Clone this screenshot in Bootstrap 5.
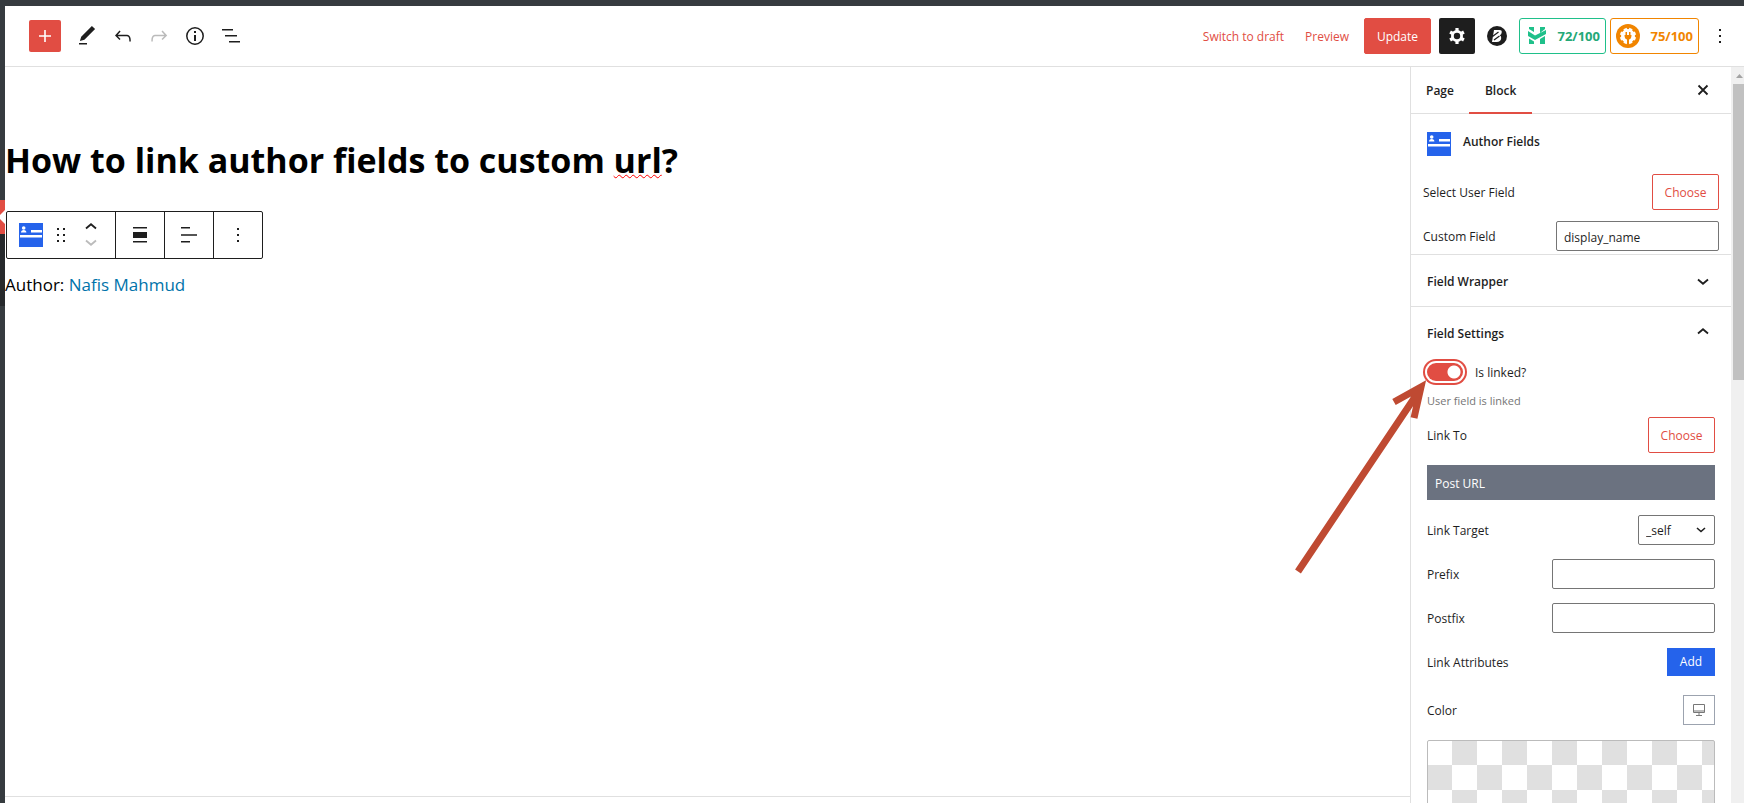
<!DOCTYPE html>
<html lang="en">
<head>
<meta charset="utf-8">
<meta name="viewport" content="width=device-width, initial-scale=1">
<title>Edit Page</title>
<link href="https://cdn.jsdelivr.net/npm/bootstrap@5.3.0/dist/css/bootstrap.min.css" rel="stylesheet">
<script src="https://cdn.jsdelivr.net/npm/bootstrap@5.3.0/dist/js/bootstrap.bundle.min.js" defer></script>
<style>
  :root { --accent: #e14d43; --ink: #1e1e1e; --line: #e0e0e0; --blue: #2563eb; }
  body { font: 12px/20px "Open Sans", "Noto Sans", sans-serif; color: var(--ink); }
  svg { display: block; flex-shrink: 0; }
  button { font: inherit; color: inherit; }
  .admin-bar { height: 6px; background: #363b3f; }
  .admin-menu { width: 5px; background: #363b3f; }
  .menu-gap { height: 194px; }
  .menu-current { height: 34px; background: var(--accent); }
  .menu-sub { height: 72px; background: #26292c; }
  .topbar { height: 61px; border-bottom: 1px solid var(--line); padding: 0 6px 0 24px; }
  .tool { width: 36px; height: 36px; padding: 6px; border: 0; background: none; }
  .tool-add { width: 32px; height: 32px; padding: 4px; background: var(--accent); border-radius: 2px; color: #fff; }
  .tool-dark { background: var(--ink); color: #fff; border-radius: 2px; }
  .btn-flat { font-size: 12px; line-height: 20px; border-radius: 2px; padding: 8px 11px 6px; min-width: 67px; }
  .btn-update { background: var(--accent); color: #fff; border-color: var(--accent); }
  .btn-choose { border-color: var(--accent); color: var(--accent); background: #fff; }
  .text-accent { color: var(--accent); text-decoration: none; }
  .header-links { gap: 21px; padding: 1px 15px 0 0; }
  .score { height: 36px; border: 1px solid; border-radius: 3px; background: #fff; font-weight: 700; font-size: 13px; padding: 0 5px; }
  .score-green { color: #1fc08a; width: 87px; padding-left: 8px; }
  .score-green span { color: #24a877; }
  .score-orange { color: #f18500; width: 89px; margin-right: 3px; }
  .post-title { font-size: 34px; line-height: 48px; font-weight: 700; color: #000; margin: 69px 0 27px; }
  .misspelt { text-decoration: underline wavy #f00 1px; text-underline-offset: 1px; text-decoration-skip-ink: none; }
  .block-toolbar { height: 48px; border: 1px solid var(--ink); border-radius: 2px; margin-left: 1px; background: #fff; }
  .block-toolbar > div + div { border-left: 1px solid var(--ink); }
  .block-toolbar button { border: 0; background: none; padding: 0; }
  .slot { width: 49px; }
  .author { font-size: 17px; line-height: 28px; color: #000; margin: 12px 0 0; }
  .author a { color: #0073aa; text-decoration: none; }
  .footer-line { height: 7px; border-top: 1px solid var(--line); }
  .settings { width: 334px; border-left: 1px solid var(--line); }
  .track { width: 13px; background: #f0f0f0; padding-left: 2px; }
  .arrow-up { height: 17px; padding: 7px 0 0 3px; }
  .thumb { height: 296px; background: #c1c1c1; }
  .tabs { height: 47px; border-bottom: 1px solid var(--line); padding-right: 18px; }
  .tabs button { border: 0; background: none; padding: 2px 15px 0; height: 47px; }
  .tabs button.active { border-bottom: 2px solid var(--accent); padding: 4px 16px 0; }
  .semi { font-weight: 600; }
  .block-card { padding: 18px 16px; }
  .top-fields { padding: 0 12px 3px; }
  .top-fields span, .top-fields label, .panel span, .panel label { padding-top: 2px; }
  .group-head { height: 52px; padding: 2px 16px 0; border: 0; border-top: 1px solid var(--line); background: none; }
  .field { width: 163px; height: 30px; border: 1px solid #757575; border-radius: 2px; padding: 2px 7px 0; color: var(--ink); font: inherit; background: #fff; }
  select.field { width: 77px; appearance: none; background: #fff url("data:image/svg+xml,%3Csvg xmlns='http://www.w3.org/2000/svg' width='10' height='6'%3E%3Cpath d='M1 1l4 3.5L9 1' fill='none' stroke='%231e1e1e' stroke-width='1.6'/%3E%3C/svg%3E") no-repeat right 8px center; }
  .panel { padding: 0 16px; }
  .gap-above-sm { margin-top: 11px; }
  .gap-above { margin-top: 14px; }
  .gap-above-md { margin-top: 15px; }
  .gap-above-lg { margin-top: 19px; }
  .switch-row { height: 28px; }
  .switch { appearance: none; width: 36px; height: 18px; margin: 0; border-radius: 9px; background: radial-gradient(circle at 27px 9px, #fff 6px, transparent 7px) var(--accent); box-shadow: 0 0 0 2px #fff, 0 0 0 4px var(--accent); }
  .hint { color: #757575; line-height: 16px; font-size: 11px; padding: 7px 0 8px; }
  .chosen { height: 35px; margin-top: 12px; background: #6b7280; color: #fff; padding: 2px 8px 0; }
  .btn-add { height: 28px; border: 0; background: var(--blue); color: #fff; padding: 0 12px; width: 48px; }
  .device { width: 32px; height: 30px; border: 1px solid #9ca3af; background: #fff; }
  .checker { height: 200px; border: 1px solid #bbb; border-radius: 2px; background: repeating-conic-gradient(#e0e0e0 0 25%, #fff 0 50%) -1px -1px / 50px 50px; }
  .pointer { position: absolute; left: -117px; top: 312px; pointer-events: none; }
</style>
</head>
<body class="vh-100 d-flex flex-column overflow-hidden bg-white">
<svg width="0" height="0" class="position-absolute" aria-hidden="true">
  <symbol id="card-icon" viewBox="0 0 24 24"><path fill="#2563eb" d="M0 0h24v24H0z"/><circle cx="4.700" cy="5" r="1.800" fill="#fff"/><path fill="#fff" d="M2 9.500q0-2.500 2.700-2.500t2.700 2.500zM12 7h11v2.500H12zM1 12h22v2.500H1z"/></symbol>
  <symbol id="down" viewBox="0 0 24 24"><path d="M7 9.500l5 4.200 5-4.200" fill="none" stroke="currentColor" stroke-width="1.800"/></symbol>
  <symbol id="up" viewBox="0 0 24 24"><path d="M7 11.500l5-4.200 5 4.200" fill="none" stroke="currentColor" stroke-width="1.800"/></symbol>
  <symbol id="dots" viewBox="0 0 24 24"><path fill="currentColor" d="M11 5h2v2h-2zM11 11h2v2h-2zM11 17h2v2h-2z"/></symbol>
</svg>

<div class="admin-bar flex-shrink-0"></div>
<div class="d-flex flex-grow-1 overflow-hidden">
  <div class="admin-menu flex-shrink-0">
    <div class="menu-gap"></div>
    <div class="menu-current"><svg width="5" height="34"><path d="M5 10v14L0 19v-4z" fill="#fff"/></svg></div>
    <div class="menu-sub"></div>
  </div>

  <div class="flex-grow-1 d-flex flex-column overflow-hidden">
    <header class="topbar d-flex align-items-center justify-content-between flex-shrink-0">
      <div class="d-flex align-items-center">
        <button class="tool tool-add me-2" aria-label="Add block"><svg width="24" height="24" viewBox="0 0 24 24"><path d="M12 6v12M6 12h12" stroke="currentColor" stroke-width="1.600"/></svg></button>
        <button class="tool" aria-label="Edit"><svg width="24" height="24" viewBox="0 0 24 24"><path fill="currentColor" d="M20.100 5.100L16.900 2 6.200 12.700l-1.300 4.400 4.500-1.300zM4 19h8v1.500H4z"/></svg></button>
        <button class="tool" aria-label="Undo"><svg width="24" height="24" viewBox="0 0 24 24"><path fill="currentColor" d="M18.300 11.700c-.6-.6-1.400-.9-2.300-.9H6.700l2.900-3.300-1.100-1-4.500 5L8.500 16l1-1-2.700-2.700H16c.5 0 .9.2 1.300.5 1 1 1 3.400 1 4.500v.3h1.500v-.2c0-1.500 0-4.300-1.500-5.700z"/></svg></button>
        <button class="tool" aria-label="Redo" disabled><svg width="24" height="24" viewBox="0 0 24 24"><path fill="#bbb" d="M15.600 6.500l-1.100 1 2.900 3.300H8c-.9 0-1.700.3-2.300.9-1.400 1.500-1.400 4.200-1.400 5.600v.2h1.500v-.3c0-1.100 0-3.500 1-4.500.3-.3.7-.5 1.300-.5h9.200L14.500 15l1.100 1.100 4.600-4.600z"/></svg></button>
        <button class="tool" aria-label="Details"><svg width="24" height="24" viewBox="0 0 24 24"><circle cx="12" cy="12" r="8.200" fill="none" stroke="currentColor" stroke-width="1.500"/><path fill="currentColor" d="M11 7h2v2h-2zM11 11h2v6h-2z"/></svg></button>
        <button class="tool" aria-label="List view"><svg width="24" height="24" viewBox="0 0 24 24"><path fill="currentColor" d="M3 5h11v1.500H3zM6 11h12v1.500H6zM10 17h11v1.500H10z"/></svg></button>
      </div>
      <div class="d-flex align-items-center">
        <div class="header-links d-flex">
          <a href="#" class="text-accent">Switch to draft</a>
          <a href="#" class="text-accent">Preview</a>
        </div>
        <button class="btn btn-flat btn-update me-2">Update</button>
        <button class="tool tool-dark me-1" aria-label="Settings"><svg width="24" height="24" viewBox="0 0 24 24"><circle cx="12" cy="12" r="4.600" fill="none" stroke="currentColor" stroke-width="2.800"/><path stroke="currentColor" stroke-width="3.200" d="M12 4v3M12 17v3M5.100 8l2.600 1.500M16.300 14.500l2.600 1.500M5.100 16l2.600-1.500M16.300 9.500l2.600-1.500"/></svg></button>
        <button class="tool me-1" aria-label="Blocks plugin"><svg width="24" height="24" viewBox="0 0 24 24"><circle cx="12" cy="12" r="10" fill="currentColor"/><path fill="#fff" d="M9 6h5.500q2.500 0 2.200 2.400-.2 1.800-1.900 2.900 1.700.9 1.400 2.900-.5 3.800-4.400 3.800H7z"/><path d="M7.500 12.500L13.500 8M9 16l5.500-4" stroke="#1e1e1e" stroke-width="1.300"/></svg></button>
        <button class="score score-green d-flex align-items-center justify-content-between me-1"><svg width="18" height="18" viewBox="0 0 18 18"><path fill="currentColor" d="M1 0h5v5L1 2zM12 0h5v2l-5 4zM0 4l7 4.500L18 3v4L7 13 0 9zM1 11.500l5 3V17H1zM12 12l5-3v8h-5z"/></svg><span>72/100</span></button>
        <button class="score score-orange d-flex align-items-center justify-content-between"><svg width="24" height="24" viewBox="0 0 24 24"><circle cx="12" cy="12" r="12" fill="currentColor"/><circle cx="12" cy="12" r="7" fill="#fff"/><path stroke="#fff" stroke-width="3.400" d="M9 4.500l6 15M15 4.500l-6 15M4.500 9l15 6M4.500 15l15-6"/><path fill="currentColor" d="M8.500 11h7q0 4-2.500 4.500V21h-2v-5.500Q8.500 15 8.500 11zM9.500 8H11v3H9.500zM13 8h1.500v3H13z"/></svg><span>75/100</span></button>
        <button class="tool" aria-label="Options"><svg width="24" height="24"><use href="#dots"/></svg></button>
      </div>
    </header>

    <div class="d-flex flex-grow-1 overflow-hidden">
      <main class="flex-grow-1 d-flex flex-column">
        <h1 class="post-title">How to link author fields to custom <span class="misspelt">url</span>?</h1>
        <div class="block-toolbar d-flex align-self-start">
          <div class="d-flex align-items-center ps-2 ms-1 pe-2 me-1">
            <button aria-label="Author Fields"><svg width="24" height="24"><use href="#card-icon"/></svg></button>
            <button class="mx-1 px-1" aria-label="Drag"><svg width="20" height="24" viewBox="0 0 20 24"><path fill="currentColor" d="M6 5h2v2H6zM12 5h2v2h-2zM6 11h2v2H6zM12 11h2v2h-2zM6 17h2v2H6zM12 17h2v2h-2z"/></svg></button>
            <div class="d-flex flex-column">
              <button aria-label="Move up"><svg width="24" height="16" viewBox="0 2 24 16"><use href="#up" width="24" height="24"/></svg></button>
              <button aria-label="Move down" disabled><svg width="24" height="16" viewBox="0 4 24 16" color="#bbb"><use href="#down" width="24" height="24"/></svg></button>
            </div>
          </div>
          <div class="slot d-flex align-items-center justify-content-center"><button aria-label="Align"><svg width="24" height="24" viewBox="0 0 24 24"><path fill="currentColor" d="M5 4h14v1.500H5zM5 9h14v6H5zM5 18h14v1.500H5z"/></svg></button></div>
          <div class="slot d-flex align-items-center justify-content-center"><button aria-label="Text align"><svg width="24" height="24" viewBox="0 0 24 24"><path fill="currentColor" d="M4 4h9v1.500H4zM4 11.200h16v1.500H4zM4 18h9v1.500H4z"/></svg></button></div>
          <div class="slot d-flex align-items-center justify-content-center"><button aria-label="More"><svg width="24" height="24"><use href="#dots"/></svg></button></div>
        </div>
        <p class="author">Author: <a href="#">Nafis Mahmud</a></p>
        <div class="footer-line mt-auto"></div>
      </main>

      <aside class="settings position-relative flex-shrink-0 d-flex">
        <div class="flex-grow-1 overflow-hidden">
          <div class="tabs semi d-flex align-items-center">
            <button>Page</button>
            <button class="active">Block</button>
            <button class="ms-auto p-0" aria-label="Close settings"><svg width="20" height="20" viewBox="0 0 20 20"><path d="M5.500 5.500l9 9m0-9l-9 9" stroke="currentColor" stroke-width="1.800"/></svg></button>
          </div>
          <div class="block-card d-flex semi"><svg width="24" height="24"><use href="#card-icon"/></svg><span class="ms-2 ps-1">Author Fields</span></div>
          <div class="top-fields">
            <div class="d-flex align-items-center justify-content-between"><span>Select User Field</span><button class="btn btn-flat btn-choose">Choose</button></div>
            <div class="d-flex align-items-center justify-content-between gap-above-sm"><label for="custom">Custom Field</label><input id="custom" class="field" value="display_name"></div>
          </div>
          <button class="group-head semi d-flex align-items-center justify-content-between w-100">Field Wrapper<svg width="24" height="24"><use href="#down"/></svg></button>
          <button class="group-head semi d-flex align-items-center justify-content-between w-100">Field Settings<svg width="24" height="24"><use href="#up"/></svg></button>
          <div class="panel">
            <div class="switch-row d-flex align-items-center"><input type="checkbox" role="switch" id="linked" class="switch" checked><label for="linked" class="ms-2 ps-1">Is linked?</label></div>
            <div class="hint">User field is linked</div>
            <div class="d-flex align-items-center justify-content-between"><span>Link To</span><button class="btn btn-flat btn-choose">Choose</button></div>
            <div class="chosen d-flex align-items-center">Post URL</div>
            <div class="d-flex align-items-center justify-content-between gap-above-md"><label for="target">Link Target</label><select id="target" class="field"><option>_self</option></select></div>
            <div class="d-flex align-items-center justify-content-between gap-above"><label for="prefix">Prefix</label><input id="prefix" class="field"></div>
            <div class="d-flex align-items-center justify-content-between gap-above"><label for="postfix">Postfix</label><input id="postfix" class="field"></div>
            <div class="d-flex align-items-center justify-content-between gap-above-md"><span>Link Attributes</span><button class="btn-add">Add</button></div>
            <div class="d-flex align-items-center justify-content-between gap-above-lg"><span>Color</span><button class="device d-flex align-items-center justify-content-center" aria-label="Desktop"><svg width="14" height="14" viewBox="0 0 14 14"><path fill="none" stroke="#777" d="M1.500 1.500h11v8h-11zM1.500 8h11M4 12.500h6M7 10v2"/></svg></button></div>
            <div class="checker gap-above-md"></div>
          </div>
        </div>
        <div class="track flex-shrink-0"><div class="arrow-up"><svg width="7" height="4"><path d="M0 4l3.500-4L7 4z" fill="#a3a3a3"/></svg></div><div class="thumb"></div></div>
        <svg class="pointer" width="132" height="198" viewBox="0 0 132 198" aria-hidden="true"><path d="M4 192.500L127 9M100 23l27-15-7 31" fill="none" stroke="#bf4a32" stroke-width="7"/></svg>
      </aside>
    </div>
  </div>
</div>
</body>
</html>
